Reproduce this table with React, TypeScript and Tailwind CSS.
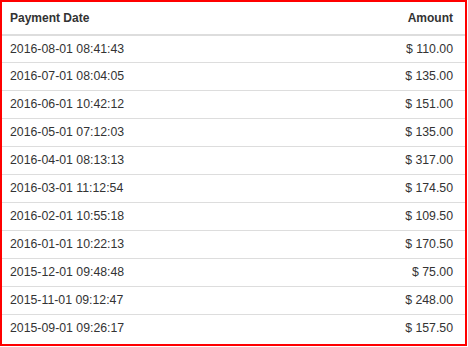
const payments = [
  { date: '2016-08-01 08:41:43', amount: '$ 110.00' },
  { date: '2016-07-01 08:04:05', amount: '$ 135.00' },
  { date: '2016-06-01 10:42:12', amount: '$ 151.00' },
  { date: '2016-05-01 07:12:03', amount: '$ 135.00' },
  { date: '2016-04-01 08:13:13', amount: '$ 317.00' },
  { date: '2016-03-01 11:12:54', amount: '$ 174.50' },
  { date: '2016-02-01 10:55:18', amount: '$ 109.50' },
  { date: '2016-01-01 10:22:13', amount: '$ 170.50' },
  { date: '2015-12-01 09:48:48', amount: '$ 75.00' },
  { date: '2015-11-01 09:12:47', amount: '$ 248.00' },
  { date: '2015-09-01 09:26:17', amount: '$ 157.50' },
]

export default function App() {
  return (
    <div className="w-[467px] h-[346px] border-2 border-[#ff0000] bg-white font-['Liberation_Sans',Arial,sans-serif] text-[12.3px] text-[#333]">
      <table className="w-full border-collapse">
        <thead>
          <tr className="h-[33px] border-b-2 border-[#ddd]">
            <th className="pl-2 text-left text-[12px] font-bold align-middle">Payment Date</th>
            <th className="pr-3 text-right text-[12px] font-bold align-middle">Amount</th>
          </tr>
        </thead>
        <tbody>
          {payments.map((p, i) => (
            <tr key={p.date} className={i === 0 ? 'h-[27px]' : 'h-[28px] border-t border-[#ddd]'}>
              <td className="pl-2 align-middle">{p.date}</td>
              <td className="pr-3 text-right align-middle">{p.amount}</td>
            </tr>
          ))}
        </tbody>
      </table>
    </div>
  )
}
